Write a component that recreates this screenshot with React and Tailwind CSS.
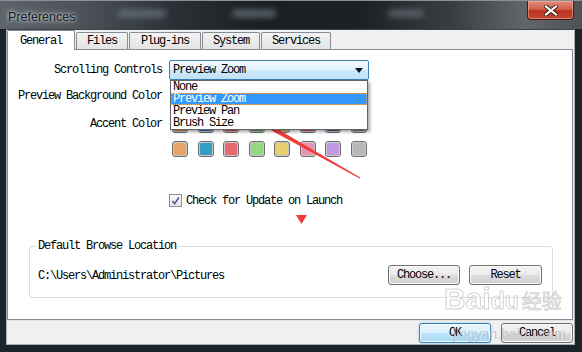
import React from "react";

const row1 = ["#e07b28", "#1a6fd8", "#c8333a", "#48a040", "#e0a030", "#c83c80", "#7a3090", "#707070"];
const row2 = ["#e8a462", "#31a0c2", "#e66a70", "#92d87e", "#e8cf72", "#e892b0", "#c298e2", "#b8b8b8"];

function Swatch({ color }) {
  return (
    <div className="w-[16px] h-[16px] rounded-[3px] border border-[#6e6e6e] bg-[#f4f4f4] p-[1px] shadow-[inset_0_0_0_1px_#c8c8c8]">
      <div className="w-full h-full rounded-[1px]" style={{ backgroundColor: color }} />
    </div>
  );
}

function Btn({ children, w, primary }) {
  return (
    <div
      className={
        primary
          ? "h-[20px] flex items-center justify-center rounded-[3px] border border-[#3c7fb1] bg-[linear-gradient(#eaf6fd_0%,#d9f0fc_50%,#bee6fd_50%,#a7d9f5_100%)] shadow-[0_0_2px_#62c0f0,inset_0_0_0_1px_#f4fbff]"
          : "h-[20px] flex items-center justify-center rounded-[3px] border border-[#707070] bg-[linear-gradient(#f2f2f2_0%,#ebebeb_50%,#dddddd_50%,#cfcfcf_100%)] shadow-[inset_0_0_0_1px_#fbfbfb]"
      }
      style={{ width: w }}
    >
      {children}
    </div>
  );
}

function Tab({ children, w, active }) {
  return active ? (
    <div
      className="relative z-10 -mb-px h-[20px] flex items-center justify-center border border-b-0 border-[#898c95] bg-white rounded-t-[2px]"
      style={{ width: w }}
    >
      {children}
    </div>
  ) : (
    <div
      className="ml-[1px] h-[17px] flex items-center justify-center border border-b-0 border-[#898c95] bg-[linear-gradient(#f3f3f3,#e3e3e3)] rounded-t-[2px]"
      style={{ width: w }}
    >
      {children}
    </div>
  );
}

export default function App() {
  return (
    <div className="relative w-[582px] h-[352px] overflow-hidden bg-[#1c2329] flex flex-col text-black font-['Liberation_Mono','DejaVu_Sans_Mono',monospace] text-[12px] tracking-[-1.2px] leading-[12px]">
      {/* Title bar */}
      <div className="relative h-[29px] shrink-0 flex items-start justify-between bg-[linear-gradient(90deg,#5d646a_0%,#4a5056_15%,#2a3035_30%,#1b1f23_45%,#1c2024_62%,#3a3f43_78%,#62666a_90%,#4e5256_100%)] border-t border-[#8a9096]">
        <div className="absolute left-[118px] top-[9px] w-[48px] h-[7px] rounded-full bg-[#7f8c98] opacity-60 blur-[3px]" />
        <div className="absolute left-[232px] top-[9px] w-[44px] h-[7px] rounded-full bg-[#8a96a2] opacity-60 blur-[3px]" />
        <div className="absolute left-[388px] top-[9px] w-[36px] h-[7px] rounded-full bg-[#8a96a2] opacity-50 blur-[3px]" />
        <div className="relative ml-[8px] mt-[8px] font-['Liberation_Sans',Arial,sans-serif] text-[12.5px] leading-[16px] tracking-normal text-[#151a1f] [text-shadow:0_0_6px_rgba(230,236,242,0.9),0_0_3px_rgba(230,236,242,0.9)]">
          Preferences
        </div>
        <div className="relative mr-[8px] w-[47px] h-[19px] rounded-b-[4px] border border-t-0 border-[#4a1a14] bg-[linear-gradient(#e28a7c_0%,#d0604e_45%,#b8321f_55%,#c44a32_100%)] shadow-[inset_0_0_0_1px_rgba(255,190,170,0.5)] flex items-center justify-center">
          <svg width="14" height="11" viewBox="0 0 14 11">
            <path d="M2 1.5 L12 9.5 M12 1.5 L2 9.5" stroke="#3a1a14" strokeWidth="4" strokeLinecap="square" />
            <path d="M2 1.5 L12 9.5 M12 1.5 L2 9.5" stroke="#ffffff" strokeWidth="2.2" strokeLinecap="square" />
          </svg>
        </div>
      </div>

      {/* Body */}
      <div className="flex-1 flex flex-col ml-[6px] mr-[7px] mb-[7px] border border-t-[#39424a] border-[#a6aeb6] bg-[#f0f0f0]">
        {/* Tab strip */}
        <div className="h-[19px] shrink-0 flex items-end">
          <Tab w={68} active>General</Tab>
          <Tab w={52}>Files</Tab>
          <Tab w={72}>Plug-ins</Tab>
          <Tab w={58}>System</Tab>
          <Tab w={70}>Services</Tab>
        </div>

        {/* Panel */}
        <div className="flex-1 flex flex-col mr-[1px] border border-[#898c95] bg-white">
          {/* Scrolling Controls */}
          <div className="mt-[10px] flex items-center h-[20px]">
            <div className="w-[154px] text-right">Scrolling Controls</div>
            <div className="relative ml-[7px] w-[200px] h-[20px]">
              <div className="h-full flex items-center justify-between pl-[3px] pr-[5px] rounded-[2px] border border-[#3c7fb1] bg-[linear-gradient(#f2f9fe_0%,#e2f2fc_50%,#cde9fa_51%,#bfe1f6_100%)]">
                <span>Preview Zoom</span>
                <svg width="8" height="5" viewBox="0 0 8 5">
                  <path d="M0 0 H8 L4 5 Z" fill="#111" />
                </svg>
              </div>
              <div className="absolute left-[1px] top-[20px] z-20 w-[198px] border border-[#646464] bg-white shadow-[2px_2px_3px_rgba(0,0,0,0.35)]">
                <div className="h-[12px] pl-[2px]">None</div>
                <div className="h-[12px] pl-[2px] bg-[#3399ff] text-white outline-1 outline-dotted outline-[#e7b27a] -outline-offset-1">
                  Preview Zoom
                </div>
                <div className="h-[12px] pl-[2px]">Preview Pan</div>
                <div className="h-[12px] pl-[2px]">Brush Size</div>
              </div>
            </div>
          </div>

          {/* Preview Background Color */}
          <div className="mt-[6px] flex items-center h-[20px]">
            <div className="w-[154px] text-right">Preview Background Color</div>
          </div>

          {/* Accent Color */}
          <div className="mt-[11px] flex items-start">
            <div className="w-[154px] text-right mt-[1px]">Accent Color</div>
            <div className="ml-[10px] flex flex-col gap-[8px]">
              <div className="flex gap-[9.5px]">
                {row1.map((c, i) => (
                  <Swatch key={i} color={c} />
                ))}
              </div>
              <div className="flex gap-[9.5px]">
                {row2.map((c, i) => (
                  <Swatch key={i} color={c} />
                ))}
              </div>
            </div>
          </div>

          {/* Checkbox */}
          <div className="mt-[37px] ml-[161px] flex items-center h-[13px]">
            <div className="w-[13px] h-[13px] border border-[#8e8f8f] bg-[linear-gradient(#ffffff,#e4e4e4)] p-[1px] flex items-center justify-center">
              <svg width="10" height="10" viewBox="0 0 10 10">
                <path d="M1.5 5 L4 8 L8.8 1.2" stroke="#4a5d8e" strokeWidth="1.8" fill="none" />
              </svg>
            </div>
            <div className="ml-[4px] mt-[1px]">Check for Update on Launch</div>
          </div>

          {/* Group box */}
          <fieldset className="mt-[33px] ml-[21px] mr-[19px] rounded-[3px] border border-[#d5dfe5] pb-[12px]">
            <legend className="ml-[6px] px-[2px]">Default Browse Location</legend>
            <div className="mt-[13px] pl-[8px] pr-[10px] flex items-center">
              <div className="flex-1 mt-[1px]">C:\Users\Administrator\Pictures</div>
              <Btn w={72}>Choose...</Btn>
              <div className="w-[9px]" />
              <Btn w={73}>Reset</Btn>
            </div>
          </fieldset>
        </div>

        {/* Bottom bar */}
        <div className="h-[24px] shrink-0 flex justify-end items-start pt-[2px] pr-[1px] border-t border-[#e4e4e4]">
          <Btn w={72} primary>OK</Btn>
          <div className="w-[10px]" />
          <Btn w={72}>Cancel</Btn>
        </div>
      </div>

      {/* Watermark */}
      <div className="pointer-events-none absolute left-[444px] top-[283px] flex items-end whitespace-nowrap font-['Liberation_Sans',Arial,sans-serif] tracking-normal text-white opacity-75 [-webkit-text-stroke:1px_#c4c4c4]">
        <span className="text-[30px] leading-[32px] font-bold">Bai</span>
        <span className="text-[23px] leading-[27px] font-bold">du</span>
        <span className="ml-[3px] text-[20px] leading-[29px] font-['Noto_Sans_CJK_SC',sans-serif]">经验</span>
      </div>
      <div className="pointer-events-none absolute left-[453px] top-[326px] whitespace-nowrap font-['Liberation_Sans',Arial,sans-serif] text-[14px] leading-[16px] tracking-normal text-[#bdbdbd] opacity-80">
        jingyan.baidu.com
      </div>

      {/* Annotations */}
      <svg className="pointer-events-none absolute left-0 top-0" width="582" height="352" viewBox="0 0 582 352">
        <polygon
          points="243,112 260.7,113.3 258.2,117.7 360.3,177.6 359.7,178.4 255.8,122.1 253.3,126.4"
          fill="#f23c3c"
        />
        <polygon points="296,215 307,215 301.5,224" fill="#f23c3c" />
      </svg>
    </div>
  );
}
